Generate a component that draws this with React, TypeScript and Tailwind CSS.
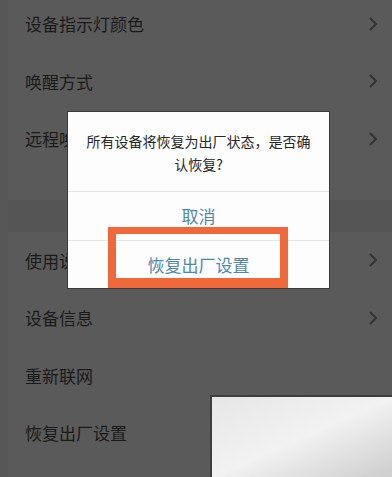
import React from "react";

const Chevron = () => (
  <svg width="10" height="16" viewBox="0 0 10 16" className="shrink-0">
    <polyline points="2,2 8,8 2,14" fill="none" stroke="#333333" strokeWidth="2" />
  </svg>
);

const Row = ({ label, arrow = true }: { label: string; arrow?: boolean }) => (
  <div className="h-[57.5px] flex items-center justify-between pl-[17px] pr-[14px]">
    <span className="text-[17px] text-[#1a1a1a] leading-none">{label}</span>
    {arrow && <Chevron />}
  </div>
);

export default function App() {
  return (
    <div
      className="relative w-[392px] h-[477px] overflow-hidden bg-[#5a5a5a]"
      style={{ fontFamily: '"Noto Sans CJK SC", "Noto Sans", sans-serif' }}
    >
      <div className="flex h-full">
        <div className="w-[8px] bg-[#575757] shrink-0" />
        <div className="flex-1 flex flex-col -mt-[5px]">
          <Row label="设备指示灯颜色" />
          <Row label="唤醒方式" />
          <Row label="远程唤醒" />
          <div className="h-[32px]" />
          <div className="h-[32px] bg-[#555555]" />
          <Row label="使用说明" />
          <Row label="设备信息" />
          <Row label="重新联网" arrow={false} />
          <Row label="恢复出厂设置" arrow={false} />
        </div>
      </div>

      {/* watermark */}
      <div className="absolute left-[210px] top-[395px] right-0 bottom-0 border-t-2 border-l-2 border-[#3e3e3e] bg-gradient-to-br from-[#e6e6e6] via-[#f2f2f2] to-[#cdcdcd]" />

      {/* dialog */}
      <div className="absolute left-[68px] top-[112px] w-[261px] h-[176px] bg-[#fdfdfd] shadow-[0_0_0_1px_#3a3a3a] flex flex-col">
        <div className="h-[79px] flex items-center justify-center px-[18px] pt-[2px]">
          <p className="text-[14px] leading-[23px] text-[#262626] text-center">
            所有设备将恢复为出厂状态，是否确认恢复?
          </p>
        </div>
        <div className="h-px bg-[#e4e4e4]" />
        <div className="h-[48px] flex items-center justify-center">
          <span className="text-[17px] text-[#4f87ad]">取消</span>
        </div>
        <div className="h-px bg-[#e4e4e4]" />
        <div className="flex-1 flex items-center justify-center">
          <span className="text-[17px] text-[#4f87ad]">恢复出厂设置</span>
        </div>
      </div>

      {/* highlight box */}
      <div className="absolute left-[108px] top-[227px] w-[180px] h-[61px] border-[#f1683a] border-t-[7px] border-l-[8px] border-r-[8px] border-b-[10px]" />
    </div>
  );
}
